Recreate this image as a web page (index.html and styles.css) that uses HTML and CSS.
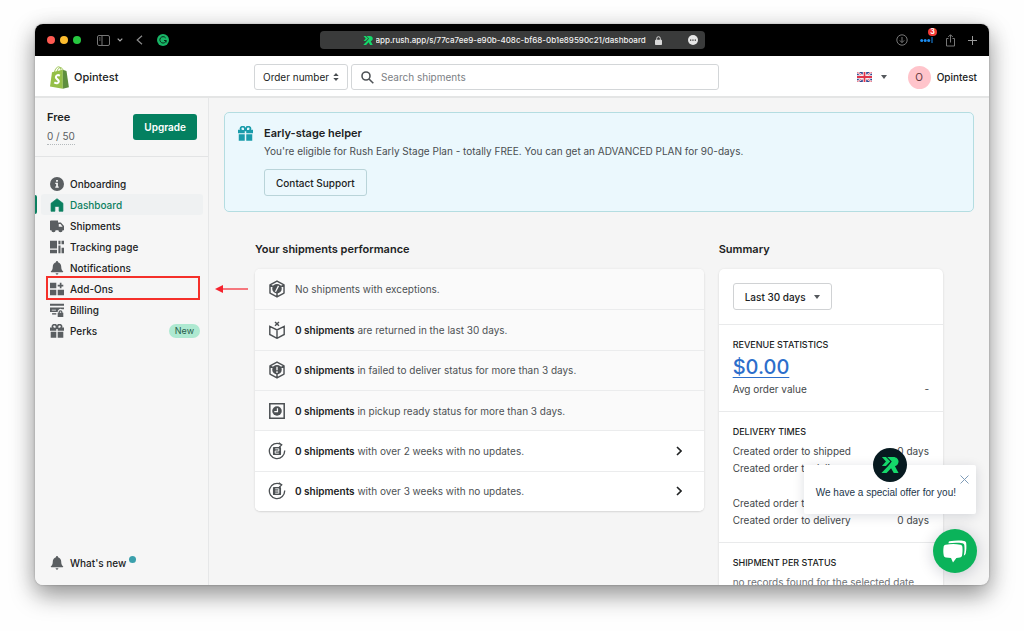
FILE: index.html
```html
<!DOCTYPE html>
<html lang="en">
<head>
<meta charset="utf-8">
<title>Opintest – Dashboard</title>
<link rel="stylesheet" href="styles.css">
</head>
<body>
<svg class="sprite" aria-hidden="true">
  <symbol id="gift" viewBox="0 0 20 20"><path d="M0 5h2.600A3.700 3.700 0 0 1 10 2.200 3.700 3.700 0 0 1 17.400 5H20v4.500h-9V7H9v2.500H0zM6.200 2a1.600 1.600 0 0 0 0 3.200H8V3.700A1.700 1.700 0 0 0 6.200 2zm7.600 0A1.700 1.700 0 0 0 12 3.700v1.500h1.800a1.600 1.600 0 0 0 0-3.200zM1 11h8v8.500H1zm10 0h8v8.500h-8z" fill-rule="evenodd"/></symbol>
  <symbol id="bell" viewBox="0 0 20 20"><path d="M10 0a1.500 1.500 0 0 0-1.500 1.700C5.500 2.500 4 5 4 8c0 4-1 5.500-2.500 6.500-.8.600-.5 1.500.5 1.500h16c1 0 1.300-.9.500-1.500C17 13.500 16 12 16 8c0-3-1.500-5.500-4.500-6.300A1.500 1.500 0 0 0 10 0zM8 17.500a2 2 0 0 0 4 0z"/></symbol>
  <symbol id="rush" viewBox="0 0 20 20"><path d="M1 1h4.500l4.800 5.200L5.500 11H1l4.500-4.800zM7 1h6.500c4 0 6 2.500 6 5.200 0 2.500-1.500 4.500-4 5.200l4 7.600h-5.300l-3-5.500-5 5.500H.5l7.500-8 4-4.800z"/></symbol>
  <symbol id="cube" viewBox="0 0 20 20"><path d="M10 1.200 17.800 5.500v9L10 18.800l-7.800-4.300v-9zM2.500 5.600 5.500 7.300M17.500 5.600l-3 1.700M10 14v4.700" fill="none" stroke="currentColor" stroke-width="1.600" stroke-linejoin="round"/><circle cx="10" cy="9.700" r="5.300"/></symbol>
  <symbol id="cycle" viewBox="0 0 20 20"><path d="M14 2.500A8.500 8.500 0 1 0 18.500 9.500M12 .8l3.200 2.400-2.700 2.600" fill="none" stroke="currentColor" stroke-width="1.500"/><rect x="5.500" y="5.500" width="9" height="9" rx="1"/></symbol>
</svg>

<div class="window">
  <header class="chrome">
    <div class="chrome-left">
      <div class="lights"><i class="light red"></i><i class="light yellow"></i><i class="light green"></i></div>
      <button class="bare tabs" aria-label="Sidebar"><svg width="13" height="11" viewBox="0 0 13 11" fill="none" stroke="currentColor"><rect x=".5" y=".5" width="12" height="10" rx="1.500"/><path d="M5 .5v10M2 3h1.500M2 5h1.500"/></svg></button>
      <button class="bare tab-menu" aria-label="Tab groups"><svg width="6" height="4" viewBox="0 0 6 4" fill="none" stroke="#aaa" stroke-width="1.200"><path d="m.7.700 2.300 2.300L5.300.7"/></svg></button>
      <button class="bare back" aria-label="Back"><svg width="7" height="10" viewBox="0 0 7 10" fill="none" stroke="#8b8b8b" stroke-width="1.200"><path d="M6 .7 1.200 5 6 9.300"/></svg></button>
      <button class="bare" aria-label="Extension"><svg width="12" height="12" viewBox="0 0 12 12"><circle cx="6" cy="6" r="6" fill="#18b566"/><path d="M8.600 3.900A3.200 3.200 0 1 0 9.200 6.500H7M9 6.500v2" fill="none" stroke="#06281a"/></svg></button>
    </div>
    <div class="address">
      <svg class="favicon" viewBox="0 0 20 20"><use href="#rush"/></svg>
      <input type="text" aria-label="Address" value="app.rush.app/s/77ca7ee9-e90b-408c-bf68-0b1e89590c21/dashboard">
      <svg width="7" height="9" viewBox="0 0 7 9"><rect y="3.800" width="7" height="5.200" rx=".8" fill="#d8d8d8"/><path d="M1.700 4V2.500a1.800 1.800 0 0 1 3.600 0V4" fill="none" stroke="#d8d8d8"/></svg>
      <button class="bare more" aria-label="More"><svg width="10" height="10" viewBox="0 0 10 10"><circle cx="5" cy="5" r="5" fill="#e6e6e6"/><path d="M2 4.500h1.300v1.200H2zm2.300 0h1.300v1.200H4.300zm2.400 0H8v1.200H6.700z" fill="#333"/></svg></button>
    </div>
    <div class="chrome-right">
      <button class="bare" aria-label="Downloads"><svg width="12" height="12" viewBox="0 0 12 12" fill="none" stroke="currentColor"><circle cx="6" cy="6" r="5.200"/><path d="M6 3v5.500M3.800 6.400 6 8.600l2.200-2.200"/></svg></button>
      <button class="bare badge-wrap" aria-label="Passwords"><svg width="13" height="6" viewBox="0 0 13 6" fill="#1b8cf0"><circle cx="1.700" cy="3.500" r="1.500"/><circle cx="5.200" cy="3.500" r="1.500"/><circle cx="8.700" cy="3.500" r="1.500"/><path d="M11.500 0h1v6h-1z"/></svg><span class="badge">3</span></button>
      <button class="bare" aria-label="Share"><svg width="11" height="13" viewBox="0 0 11 13" fill="none" stroke="currentColor"><path d="M3.500 4.500h-2v7.500h8V4.500h-2M5.500 8.500V1M3.200 3l2.300-2.300L7.800 3"/></svg></button>
      <button class="bare" aria-label="New tab"><svg width="9" height="9" viewBox="0 0 9 9" fill="none" stroke="#9a9a9a"><path d="M4.500 0v9M0 4.500h9"/></svg></button>
    </div>
  </header>

  <div class="topbar">
    <a class="brand" href="#">
      <svg width="19" height="23" viewBox="0 0 19 23"><path d="M2 6.200 12.800 3.800V22.800L0 20.600z" fill="#95bf47"/><path d="M12.800 3.800 16.500 5 18.900 21.300 12.800 22.800z" fill="#5e8e3e"/><path d="M4.500 6C5 3 7 .8 8.800.8c1.500 0 2.200 1.700 2.200 4M7 5.500C7.500 3 9 1.700 10.500 1.700S13 3.200 13 4.500" fill="none" stroke="#95bf47" stroke-width=".9"/><path d="M9.900 9.600C7.600 8.500 5.800 9.500 5.900 11.300c.1 2 3.100 2.200 2.900 4.200-.2 2-2.600 2.300-4.500.9" fill="none" stroke="#fff" stroke-width="2.100"/></svg>
      <span>Opintest</span>
    </a>
    <form class="search">
      <div class="select-wrap">
        <select aria-label="Search by"><option>Order number</option></select>
        <svg width="6" height="8" viewBox="0 0 6 8" fill="#4a4e52"><path d="M3 0l2.700 3H.3zM3 8L.3 5h5.400z"/></svg>
      </div>
      <label class="search-box">
        <svg width="13" height="13" viewBox="0 0 13 13" fill="none" stroke="#4f5357" stroke-width="1.600"><circle cx="5" cy="5" r="4"/><path d="m8 8 4.300 4.300"/></svg>
        <input type="search" placeholder="Search shipments" aria-label="Search shipments">
      </label>
    </form>
    <div class="account">
      <button class="bare lang" aria-label="Language"><svg width="15" height="10" viewBox="0 0 15 10"><rect width="15" height="10" rx="1.500" fill="#33488f"/><path d="m0 0 15 10M15 0 0 10" stroke="#fff" stroke-width="2"/><path d="m0 0 15 10M15 0 0 10" stroke="#e0455a" stroke-width=".8"/><path d="M7.500 0v10M0 5h15" stroke="#fff" stroke-width="3.400"/><path d="M7.500 0v10M0 5h15" stroke="#e0354b" stroke-width="1.800"/></svg><i class="caret"></i></button>
      <button class="bare profile"><span class="avatar">O</span><span>Opintest</span></button>
    </div>
  </div>

  <div class="body">
    <aside class="sidebar">
      <div class="plan">
        <div><strong>Free</strong><span class="quota">0 / 50</span></div>
        <button class="upgrade">Upgrade</button>
      </div>
      <nav class="nav">
        <a href="#"><svg viewBox="0 0 20 20"><circle cx="10" cy="10" r="10"/><path d="M8.700 4.300h2.600v2.500H8.700zM7.500 8.300h3.800v5.200h1.200v1.700h-5v-1.700h1.300V10H7.500z" fill="#f5f5f5"/></svg>Onboarding</a>
        <a href="#" class="active"><svg viewBox="0 0 20 20"><path d="M10 1 1.500 7.500V19H7v-7h6v7h5.500V7.500z" stroke="currentColor" stroke-linejoin="round"/></svg>Dashboard</a>
        <a href="#"><svg viewBox="0 0 20 20"><path d="M1 2h10.500v3h4L20 10v6h-2a3 3 0 0 1-6 0H8a3 3 0 0 1-6 0H0V3zm11.500 5v4H18l-3-4z" fill-rule="evenodd"/><circle cx="5" cy="16" r="2"/><circle cx="15" cy="16" r="2"/></svg>Shipments</a>
        <a href="#"><svg viewBox="0 0 20 20"><path d="M0 1h10v11H0zm0 13h10v5H0zm12-13h3v5h-3zm4.500 0H20v5h-3.500zM12 8h3v11h-3zm4.500 3H20v8h-3.500z"/></svg>Tracking page</a>
        <a href="#"><svg viewBox="0 0 20 20"><use href="#bell"/></svg>Notifications</a>
        <a href="#" class="marked"><svg viewBox="0 0 20 20"><path d="M0 1h9v8H0zm0 10h9v8H0zm11 0h9v8h-9zM14 1h2.400v3H19v2.400h-2.600V9H14V6.400h-3V4h3z"/></svg>Add-Ons</a>
        <a href="#"><svg viewBox="0 0 20 20"><path d="M0 1h20v3H0zm0 5.500h20v2.500h-3a4 4 0 0 0-6 4H0zm2.500 3v1.300h6V9.500zM11 14h1.200v-1a2.800 2.800 0 0 1 5.600 0v1H19v6h-8zm3 0h2v-1a1 1 0 0 0-2 0z" fill-rule="evenodd"/><path d="M3 14.500h6v2H3z"/></svg>Billing</a>
        <a href="#"><svg viewBox="0 0 20 20"><use href="#gift"/></svg>Perks<span class="new">New</span></a>
      </nav>
      <svg class="arrow" width="33" height="8" viewBox="0 0 33 8"><path d="M7 4h26" stroke="#f5222d" stroke-width="1.200"/><path d="M0 4l8-4v8z" fill="#f5222d"/></svg>
      <a class="whats-new" href="#"><svg viewBox="0 0 20 20"><use href="#bell"/></svg>What's new<i class="dot"></i></a>
    </aside>

    <main class="main">
      <section class="banner">
        <svg class="banner-icon" viewBox="0 0 20 20"><use href="#gift"/></svg>
        <div>
          <h2>Early-stage helper</h2>
          <p>You're eligible for Rush Early Stage Plan - totally FREE. You can get an ADVANCED PLAN for 90-days.</p>
          <button class="outline">Contact Support</button>
        </div>
      </section>

      <div class="columns">
        <section>
          <h2>Your shipments performance</h2>
          <ul class="card list">
            <li><svg viewBox="0 0 20 20"><use href="#cube"/><path d="M11.700 6.500 8.300 13" stroke="#fafafa" stroke-width="1.400"/></svg><span>No shipments with exceptions.</span></li>
            <li><svg viewBox="0 0 20 20" fill="none" stroke="currentColor" stroke-width="1.600"><path d="M2 6v9l8 4.200 8-4.200V6l-8 4zM10 10v9M7.800 1l4.400 4.400M12.200 1 7.800 5.400"/></svg><span><b>0 shipments</b> are returned in the last 30 days.</span></li>
            <li><svg viewBox="0 0 20 20"><use href="#cube"/><path d="M10 6.300v4M10 11.500v1.700" stroke="#fafafa" stroke-width="1.500"/></svg><span><b>0 shipments</b> in failed to deliver status for more than 3 days.</span></li>
            <li><svg viewBox="0 0 20 20"><path d="M2 2h16v16H2z" fill="none" stroke="currentColor" stroke-width="1.700"/><circle cx="10" cy="10" r="5.300"/><path d="M10.500 7v3.700H7" fill="none" stroke="#fafafa" stroke-width="1.400"/></svg><span><b>0 shipments</b> in pickup ready status for more than 3 days.</span></li>
            <li class="live"><svg viewBox="0 0 20 20"><use href="#cycle"/><path d="M8 7.600h4V10H8v2.400h4" fill="none" stroke="#fff"/></svg><span><b>0 shipments</b> with over 2 weeks with no updates.</span><svg class="go" viewBox="0 0 6 10"><path d="m1 1 4 4-4 4"/></svg></li>
            <li class="live"><svg viewBox="0 0 20 20"><use href="#cycle"/><path d="M8 7.600h4v4.800H8M8 10h4" fill="none" stroke="#fff"/></svg><span><b>0 shipments</b> with over 3 weeks with no updates.</span><svg class="go" viewBox="0 0 6 10"><path d="m1 1 4 4-4 4"/></svg></li>
          </ul>
        </section>

        <section>
          <h2>Summary</h2>
          <div class="card summary">
            <div class="block"><button class="outline period">Last 30 days<i class="caret"></i></button></div>
            <div class="block">
              <h3>Revenue statistics</h3>
              <a class="amount" href="#">$0.00</a>
              <dl><div><dt>Avg order value</dt><dd>-</dd></div></dl>
            </div>
            <div class="block times">
              <h3>Delivery times</h3>
              <dl>
                <div><dt>Created order to shipped</dt><dd>0 days</dd></div>
                <div class="tall"><dt>Created order to delivery</dt></div>
                <div><dt>Created order to pickup</dt><dd>0 days</dd></div>
                <div><dt>Created order to delivery</dt><dd>0 days</dd></div>
              </dl>
            </div>
            <div class="block">
              <h3>Shipment per status</h3>
              <p class="empty">no records found for the selected date</p>
            </div>
          </div>
        </section>
      </div>
    </main>
  </div>

  <div class="offer">
    <span class="offer-logo"><svg viewBox="0 0 20 20"><use href="#rush"/></svg></span>
    <p>We have a special offer for you!</p>
    <button class="bare close" aria-label="Close"><svg width="9" height="9" viewBox="0 0 9 9" fill="none" stroke="#7f9cb8"><path d="m.5.500 8 8M8.500.5l-8 8"/></svg></button>
  </div>
  <button class="chat" aria-label="Chat"><svg width="24" height="23" viewBox="0 0 24 23" fill="#fff"><path d="M6.500 1.200C12 .3 17 .2 21 .9c1.500.3 2 .8 2.200 2.100.4 3.500.2 7-.5 10.500-.3 1.200-.9 1.800-1.900 2 .8-4 .9-7 .5-10.300-.1-1.200-.7-1.800-2-2C15 2.600 10 2.700 5.500 3.300c0-1 .2-1.900 1-2.100z"/><path d="M2.700 4.700c5-.8 10-.8 14.500 0 1.500.3 2 .9 2.200 2.200.3 3 .2 5.500-.3 8.300-.3 1.500-.9 2-2.200 2.300l-3.500.5L10 22.500 8 18l-5-.5c-1.500-.3-2-.8-2.300-2.200C.2 12 .2 9.500.6 6.900.8 5.500 1.300 5 2.700 4.700z"/></svg></button>
</div>
</body>
</html>
```
FILE: styles.css
```css
* { box-sizing: border-box; }
body {
  margin: 0;
  height: 100vh;
  padding: 24px 35px 46px;
  background: #fefefe;
  color: #202223;
  font: 10px/16px Inter, "Liberation Sans", sans-serif;
  overflow: hidden;
}
h2, h3, p, ul, dl, dd { margin: 0; padding: 0; }
h2 { font-size: 11px; line-height: 16px; font-weight: 600; }
a { color: inherit; text-decoration: none; }
button, input, select { font: inherit; color: inherit; }
svg { display: block; flex: none; }
svg:not([fill]) { fill: currentColor; }
.sprite { position: absolute; width: 0; height: 0; }
.bare { display: flex; padding: 0; border: 0; background: none; }

.window {
  position: relative;
  display: flex;
  flex-direction: column;
  height: 100%;
  border-radius: 8px;
  background: #f5f5f5;
  overflow: hidden;
  box-shadow: 0 0 2px rgba(0, 0, 0, .3), 0 10px 24px rgba(0, 0, 0, .4), 0 2px 24px rgba(0, 0, 0, .08);
}

.chrome {
  display: grid;
  grid-template-columns: 1fr 385px 1fr;
  align-items: center;
  height: 32px;
  flex: none;
  padding: 0 12px;
  background: #000;
  color: #777;
}
.chrome-left, .chrome-right, .lights { display: flex; align-items: center; }
.lights { gap: 5px; margin-right: 16px; }
.light { width: 8px; height: 8px; border-radius: 50%; }
.red { background: #ff5a52; }
.yellow { background: #fcbc2e; }
.green { background: #27c840; }
.tabs { margin-right: 7px; }
.tab-menu { margin-right: 13px; }
.back { margin-right: 14px; }
.chrome-right { justify-content: flex-end; gap: 12px; }
.badge-wrap { position: relative; }
.badge {
  position: absolute;
  top: -9px;
  right: -4px;
  width: 9px;
  height: 8px;
  border-radius: 4px;
  background: #f33b36;
  color: #fff;
  font-size: 7px;
  line-height: 8px;
  font-weight: 700;
  text-align: center;
}
.address {
  position: relative;
  display: flex;
  align-items: center;
  justify-content: center;
  gap: 3px;
  height: 18px;
  border-radius: 4px;
  background: #3a3b3b;
}
.address input {
  width: 276px;
  padding: 0;
  border: 0;
  background: none;
  color: #f2f2f2;
  font-size: 8px;
  font-weight: 500;
}
.favicon { width: 10px; height: 11px; color: #14d86a; }
.more { position: absolute; right: 7px; }

.topbar {
  display: grid;
  grid-template-columns: 204px minmax(0, 465px) 1fr;
  align-items: center;
  height: 42px;
  flex: none;
  padding: 2px 12px 0 15px;
  border-bottom: 2px solid #e4e5e5;
  background: #fff;
}
.brand { display: flex; align-items: center; gap: 5px; font-size: 11px; font-weight: 500; }
.search { display: flex; gap: 3px; }
.select-wrap { position: relative; flex: none; width: 94px; }
.select-wrap svg { position: absolute; top: 9px; right: 9px; pointer-events: none; }
.select-wrap select {
  width: 100%;
  height: 26px;
  padding: 0 8px;
  border: 1px solid #d3d6d8;
  border-radius: 3px;
  background: #fff;
  appearance: none;
}
.search-box {
  display: flex;
  flex: 1;
  align-items: center;
  gap: 7px;
  height: 26px;
  padding: 0 9px;
  border: 1px solid #d3d6d8;
  border-radius: 3px;
}
.search-box input { flex: 1; min-width: 0; padding: 0; border: 0; outline: 0; background: none; }
.search-box input::placeholder { color: #7b8084; opacity: 1; }
.account { display: flex; align-items: center; justify-content: flex-end; gap: 21px; }
.lang { align-items: center; gap: 9px; }
.caret { border: solid transparent; border-width: 4px 3px 0; border-top-color: #54585c; }
.profile { align-items: center; gap: 6px; font-weight: 500; }
.avatar {
  width: 23px;
  height: 23px;
  border-radius: 50%;
  background: #ffc4cb;
  color: #5b3237;
  font-weight: 400;
  line-height: 23px;
}

.body { display: flex; flex: 1; min-height: 0; }
.sidebar {
  position: relative;
  display: flex;
  flex-direction: column;
  flex: none;
  width: 174px;
  border-right: 1px solid #e6e7e8;
  background: #f6f6f6;
}
.plan {
  display: flex;
  align-items: center;
  justify-content: space-between;
  padding: 11px 11px 11px 12px;
  border-bottom: 1px solid #e3e4e5;
}
.plan strong { display: block; margin-bottom: 3px; font-size: 11px; line-height: 16px; font-weight: 600; }
.quota { display: block; border-bottom: 1px dotted #b5babd; color: #5a5e62; }
.upgrade {
  height: 26px;
  padding: 0 11px;
  border: 0;
  border-radius: 3px;
  background: #048060;
  color: #fff;
  font-weight: 600;
}
.nav { display: flex; flex-direction: column; padding: 16px 5px 0 6px; }
.nav a, .whats-new {
  position: relative;
  display: flex;
  align-items: center;
  gap: 6px;
  height: 21px;
  padding: 0 3px 0 9px;
  border-radius: 3px;
  font-weight: 500;
}
.nav svg, .whats-new svg { width: 14px; height: 14px; color: #5a5e61; }
.nav .active { background: #eff1f2; color: #0b8060; }
.nav .active svg { color: #0b8060; }
.active::before {
  content: "";
  position: absolute;
  left: -6px;
  width: 2px;
  height: 19px;
  border-radius: 0 2px 2px 0;
  background: #0b8060;
}
.marked::after {
  content: "";
  position: absolute;
  inset: -2px 3px -1px 5px;
  border: 2px solid #f5302a;
}
.arrow { position: absolute; top: 187px; left: 180px; z-index: 1; }
.new {
  margin-left: auto;
  padding: 0 6px;
  border-radius: 7px;
  background: #aee9d1;
  color: #285c4a;
  font-size: 9px;
  line-height: 14px;
  font-weight: 400;
}
.whats-new { margin: auto 5px 12px 6px; }
.dot { width: 7px; height: 7px; margin: 0 0 6px -3px; border-radius: 50%; background: #3ba0ac; }

.main { flex: 1; min-width: 0; padding: 14px 15px 0; }
.banner {
  display: flex;
  gap: 11px;
  padding: 12px 13px 15px;
  border: 1px solid #b4dde1;
  border-radius: 5px;
  background: #ebf8fd;
}
.banner-icon { width: 15px; height: 15px; margin-top: 1px; color: #1a9cab; }
.banner p { margin: 2px 0 10px; color: #494d50; }
.outline {
  height: 27px;
  padding: 0 11px;
  border: 1px solid #b9d4d9;
  border-radius: 3px;
  background: transparent;
  font-weight: 500;
}
.columns { display: grid; grid-template-columns: 2fr 1fr; gap: 15px; margin: 29px 31px 0; }
.card {
  margin-top: 12px;
  border-radius: 5px;
  background: #fff;
  box-shadow: 0 0 3px rgba(23, 24, 24, .06), 0 1px 2px rgba(0, 0, 0, .1);
}
.list { display: grid; grid-auto-rows: 1fr; min-height: 242px; list-style: none; overflow: hidden; }
.list li {
  display: flex;
  align-items: center;
  gap: 9px;
  padding: 0 22px 0 13px;
  background: #fafafa;
  color: #4d5154;
}
.list li + li { border-top: 1px solid #ebeced; }
.list .live { background: #fff; }
.list svg { width: 18px; height: 18px; }
.list b { color: #202223; font-weight: 600; }
.list .go { width: 6px; height: 10px; margin-left: auto; fill: none; stroke: #202223; stroke-width: 1.6; }
.block { padding: 12px 14px 13px; }
.block:first-child { padding: 14px; }
.block + .block { border-top: 1px solid #e9eaeb; }
.period { display: flex; align-items: center; gap: 8px; border-color: #d0d2d4; }
h3 { font-size: 9px; line-height: 16px; font-weight: 500; text-transform: uppercase; }
.amount { display: block; width: fit-content; color: #2c6ecb; font-size: 20px; line-height: 28px; font-weight: 500; text-decoration: underline; text-decoration-thickness: 1px; text-underline-offset: 3px; }
dl div { display: flex; justify-content: space-between; line-height: 17px; color: #43474a; }
.times dl { padding-top: 3px; }
.times .tall { height: 35px; }
.empty { margin-top: 3px; color: #6d7175; }

.offer {
  position: absolute;
  right: 13px;
  bottom: 71px;
  padding: 20px 20px 13px 12px;
  border-radius: 2px;
  background: #fff;
  color: #22364b;
  box-shadow: 0 2px 12px rgba(0, 20, 50, .14);
  font-family: "Liberation Sans", Arial, sans-serif;
}
.offer-logo {
  position: absolute;
  top: -17px;
  left: 69px;
  display: grid;
  place-items: center;
  width: 34px;
  height: 34px;
  border-radius: 50%;
  background: #071a20;
  color: #14d86a;
}
.offer-logo svg { width: 18px; height: 20px; }
.close { position: absolute; top: 10px; right: 7px; }
.chat {
  position: absolute;
  right: 12px;
  bottom: 12px;
  display: grid;
  place-items: center;
  width: 44px;
  height: 44px;
  padding: 0;
  border: 0;
  border-radius: 50%;
  background: #0bb35a;
  box-shadow: 0 2px 16px rgba(0, 20, 50, .2);
}
```
